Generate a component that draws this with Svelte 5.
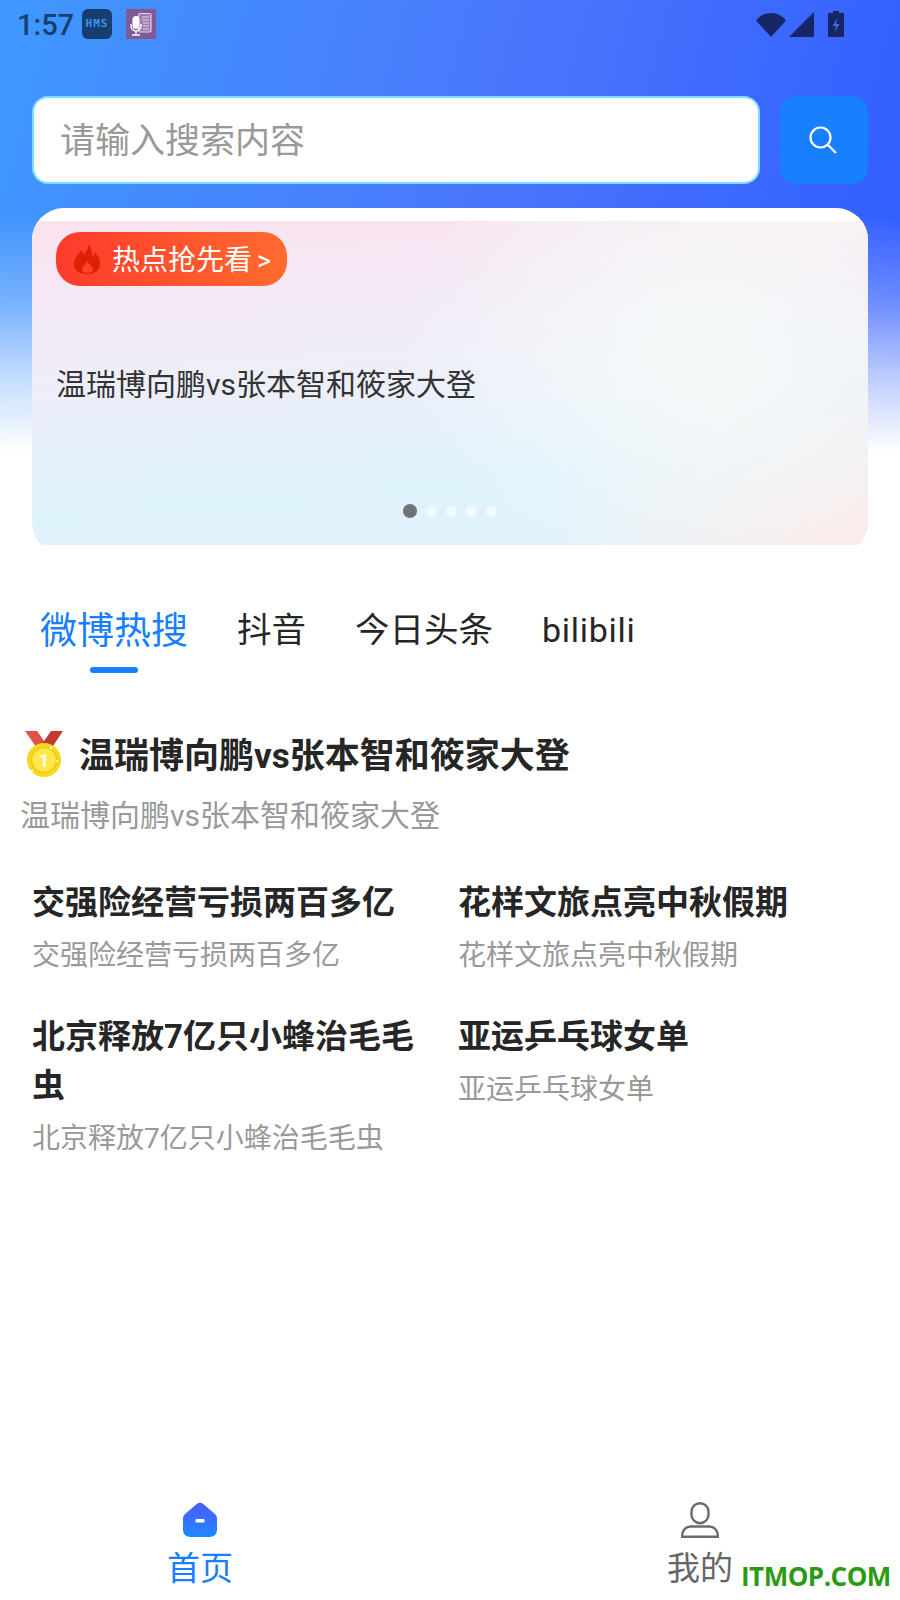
<script>
  const tabs = ['微博热搜', '抖音', '今日头条', 'bilibili'];
  const items = [
    { title: '交强险经营亏损两百多亿', sub: '交强险经营亏损两百多亿' },
    { title: '花样文旅点亮中秋假期', sub: '花样文旅点亮中秋假期' },
    { title: '北京释放7亿只小蜂治毛毛虫', sub: '北京释放7亿只小蜂治毛毛虫' },
    { title: '亚运乒乓球女单', sub: '亚运乒乓球女单' }
  ];
  const headline = '温瑞博向鹏vs张本智和筱家大登';
</script>

<div class="page">
  <div class="status">
    <span class="time">1:57</span>
    <span class="hms">HMS</span>
    <span class="voice">
      <svg viewBox="0 0 30 30" width="30" height="30">
        <rect x="12.500" y="4.500" width="12.500" height="18.500" rx="1.500" fill="#9c7cb0" stroke="#e3d6ea" stroke-width="1.200" />
        <path d="M16 8h7M16 11h7M17 14h6M17 17h6M17 20h6" stroke="#e3d6ea" stroke-width="1.200" />
        <rect x="6.500" y="7" width="7" height="13" rx="3.500" fill="#fff" />
        <path d="M5 15v2a5 5 0 0 0 10 0v-2M10 22v3M6 26h8" fill="none" stroke="#fff" stroke-width="1.400" />
      </svg>
    </span>
    <span class="sys">
      <svg class="wifi" viewBox="0 0 30 25" width="30" height="25"><path d="M0 8.500C4 3.500 9 1 15 1s11 2.500 15 7.500L15 25z" fill="#172766" /></svg>
      <svg class="signal" viewBox="0 0 25 25" width="25" height="25"><path d="M25 0v25H0z" fill="#172766" /></svg>
      <svg class="battery" viewBox="0 0 16 26" width="16" height="26">
        <path d="M5 0h6v2h4a1 1 0 0 1 1 1v22a1 1 0 0 1-1 1H1a1 1 0 0 1-1-1V3a1 1 0 0 1 1-1h4z" fill="#172766" />
        <path d="M9.500 7 4.500 15H8l-1.500 6 5-8H8z" fill="#4267fb" />
      </svg>
    </span>
  </div>

  <div class="search">
    <div class="field">请输入搜索内容</div>
    <div class="btn">
      <svg viewBox="0 0 28 28" width="28" height="28" fill="none" stroke="#fff" stroke-width="2.200">
        <circle cx="11.500" cy="11.500" r="10" />
        <path d="M18.500 18.500 27 27" />
      </svg>
    </div>
  </div>

  <div class="card">
    <div class="banner">
      <div class="badge">
        <svg viewBox="0 0 26 30" width="26" height="30">
          <path d="M14 0c1 5-2 7-4 10C9 8.500 8.500 7.500 8 6 3 11 0 15 0 20c0 6 5 10 12 10h2c7 0 12-4 12-10 0-5-2-8-5-12-.5 2-1 3.500-2.500 4.500C18.500 7.500 17 3 14 0zM13.500 16c0 4 5.500 6 5.500 9.500 0 2-2 3.500-5.500 3.500S8 27.500 8 25c0-3 5-5 5.500-9z" fill="#dd2106" fill-rule="evenodd" />
        </svg>
        <span class="badge-text">热点抢先看</span>
        <span class="chev">&gt;</span>
      </div>
      <div class="banner-title">{headline}</div>
      <div class="dots">
        {#each [0, 1, 2, 3, 4] as d}
          <span class="dot" class:on={d === 0}></span>
        {/each}
      </div>
    </div>
  </div>

  <div class="tabs">
    {#each tabs as t, i}
      <div class="tab" class:active={i === 0}>{t}</div>
    {/each}
  </div>

  <div class="top">
    <div class="top-title">
      <svg class="medal" viewBox="0 0 38 46" width="38" height="46">
        <path d="M0 0h12l10 14-8 6z" fill="#e0514a" />
        <path d="M38 0H26L15 16l9 5z" fill="#c23a2e" />
        <circle cx="19" cy="29" r="17" fill="#f6d81c" />
        <circle cx="19" cy="29" r="12.500" fill="#ffe94a" stroke="#f0c915" stroke-width="1.500" />
        <text x="19" y="35.500" text-anchor="middle" class="medal-n">1</text>
        <circle cx="26" cy="17" r="1.200" fill="#fff" />
        <circle cx="7" cy="40" r="1.200" fill="#fff" />
        <circle cx="32" cy="30" r="1" fill="#fff" />
      </svg>
      <span>{headline}</span>
    </div>
    <div class="top-sub">{headline}</div>
  </div>

  <div class="list">
    {#each items as it}
      <div class="item">
        <div class="it-title">{it.title}</div>
        <div class="it-sub">{it.sub}</div>
      </div>
    {/each}
  </div>

  <div class="nav">
    <div class="nav-item active">
      <svg viewBox="0 0 34 34" width="34" height="34">
        <defs>
          <linearGradient id="homeg" x1="0" y1="0" x2="0" y2="1">
            <stop offset="0" stop-color="#4c5cfb" />
            <stop offset="1" stop-color="#1f88ff" />
          </linearGradient>
        </defs>
        <path d="M13.500 1.300 2 11A6 6 0 0 0 0 15.500V27a7 7 0 0 0 7 7h20a7 7 0 0 0 7-7V15.500A6 6 0 0 0 32 11L20.500 1.300a5.500 5.500 0 0 0-7 0z" fill="url(#homeg)" />
        <rect x="12.500" y="16" width="9" height="3.500" rx="1" fill="#fff" />
      </svg>
      <span>首页</span>
    </div>
    <div class="nav-item">
      <svg viewBox="0 0 38 36" width="38" height="36" fill="none" stroke="#6b6b6b" stroke-width="2.400">
        <rect x="10.500" y="1.200" width="17" height="20" rx="8.500" />
        <path d="M10 24.500h18a8.500 8.500 0 0 1 8.800 8.500v1.800H1.200V33A8.500 8.500 0 0 1 10 24.500z" />
      </svg>
      <span>我的</span>
    </div>
    <div class="mark">ITMOP.COM</div>
  </div>
</div>

<style>
  :global(body) {
    margin: 0;
    background: #fff;
  }
  .page {
    position: relative;
    width: 900px;
    height: 1600px;
    display: flex;
    flex-direction: column;
    overflow: hidden;
    font-family: Roboto, "Noto Sans CJK SC", sans-serif;
    background:
      linear-gradient(to bottom, rgba(255, 255, 255, 0) 0, rgba(255, 255, 255, 0) 215px, rgba(255, 255, 255, 0.28) 300px, rgba(255, 255, 255, 0.72) 385px, #fff 452px) no-repeat,
      linear-gradient(105deg, #3f98ff 0%, #4a78fc 50%, #2f5bff 100%) no-repeat;
    background-size: 100% 452px;
  }

  .status {
    height: 50px;
    display: flex;
    align-items: center;
    padding: 0 56px 0 17px;
    box-sizing: border-box;
    flex: none;
  }
  .time {
    font-size: 29px;
    font-weight: 500;
    line-height: 50px;
    color: #17406f;
    width: 65px;
  }
  .hms {
    width: 30px;
    height: 30px;
    border-radius: 6px;
    background: #173e70;
    color: #3d94ec;
    font: 700 11px/30px "DejaVu Sans Mono", monospace;
    text-align: center;
    letter-spacing: 1px;
    margin-top: -2px;
  }
  .voice {
    width: 30px;
    height: 30px;
    margin: -2px 0 0 14px;
    background: #7f5a94;
    display: block;
  }
  .voice svg,
  .sys svg {
    display: block;
  }
  .sys {
    margin-left: auto;
    display: flex;
    align-items: center;
    margin-top: -2px;
  }
  .signal {
    margin-left: 3px;
  }
  .battery {
    margin-left: 14px;
  }

  .search {
    margin: 46px 32px 0;
    display: flex;
    gap: 20px;
    height: 88px;
    flex: none;
  }
  .field {
    flex: 1;
    background: #fff;
    border: 2px solid #7ddcff;
    border-radius: 16px;
    box-sizing: border-box;
    padding: 2px 0 0 26px;
    font-size: 35px;
    line-height: 84px;
    color: #999;
  }
  .btn {
    width: 88px;
    border-radius: 16px;
    background: #187fff;
    display: flex;
    align-items: center;
    justify-content: center;
  }
  .btn svg {
    transform: translate(-1px, 0);
  }

  .card {
    margin: 24px 32px 0;
    height: 337px;
    flex: none;
    background: #fff;
    padding-top: 13px;
    box-sizing: border-box;
    border-radius: 32px 32px 12px 12px / 32px 32px 26px 26px;
    overflow: hidden;
  }
  .banner {
    height: 324px;
    position: relative;
    padding: 11px 24px 0;
    box-sizing: border-box;
    background:
      radial-gradient(ellipse 300px 230px at 80% 40%, #f5faf9 0%, rgba(245, 250, 249, 0) 100%),
      radial-gradient(ellipse 320px 220px at 100% 100%, #feebe9 0%, rgba(254, 235, 233, 0) 100%),
      radial-gradient(ellipse 420px 120px at 100% 0%, #f9eef4 0%, rgba(249, 238, 244, 0) 100%),
      linear-gradient(176deg, #fbe2f0 0%, #efeef9 42%, #dff3fd 76%, #e2f3fb 100%);
  }
  .badge {
    width: 231px;
    height: 54px;
    border-radius: 24px;
    background: linear-gradient(90deg, #ff3b2c 0%, #ff6b2f 100%);
    display: flex;
    align-items: center;
    padding: 0 0 0 18px;
    box-sizing: border-box;
    color: #fff;
  }
  .badge-text {
    font-size: 28px;
    margin: 4px 0 0 12px;
    line-height: 50px;
    white-space: nowrap;
  }
  .chev {
    font-size: 27px;
    margin: 4px 0 0 5px;
    line-height: 50px;
  }
  .banner-title {
    margin: 77px 0 0 0;
    font-size: 30px;
    line-height: 44px;
    color: #333;
    white-space: nowrap;
  }
  .dots {
    position: absolute;
    left: 371px;
    top: 283px;
    display: flex;
    align-items: center;
    gap: 9px;
  }
  .dot {
    width: 11px;
    height: 11px;
    border-radius: 50%;
    background: rgba(255, 255, 255, 0.6);
  }
  .dot.on {
    width: 14px;
    height: 14px;
    background: #6f7377;
  }

  .tabs {
    display: flex;
    align-items: flex-start;
    margin-top: 59px;
    padding-left: 40px;
    height: 52px;
    flex: none;
    color: #262626;
    font-size: 34.500px;
  }
  .tab {
    position: relative;
    margin-right: 49px;
    line-height: 52px;
    white-space: nowrap;
  }
  .tab:nth-child(4) {
    font-size: 34px;
    letter-spacing: 0.7px;
  }
  .tab.active {
    font-size: 37px;
    line-height: 56px;
    color: #187fff;
  }
  .tab.active::after {
    content: "";
    position: absolute;
    left: 50px;
    top: 63px;
    width: 48px;
    height: 6px;
    border-radius: 3px;
    background: #187fff;
  }

  .top {
    margin-top: 71px;
    padding-left: 20px;
    flex: none;
  }
  .top-title {
    display: flex;
    align-items: center;
    height: 50px;
    font-size: 35px;
    font-weight: 700;
    color: #262626;
    white-space: nowrap;
  }
  .medal {
    margin: 3px 16px 0 5px;
  }
  .medal-n {
    font: 700 18px Roboto, sans-serif;
    fill: #fff;
  }
  .top-sub {
    margin-top: 17px;
    font-size: 30px;
    line-height: 44px;
    color: #999;
    white-space: nowrap;
  }

  .list {
    margin-top: 40px;
    padding-left: 32px;
    display: grid;
    grid-template-columns: 426px 425px;
    row-gap: 34px;
    align-content: start;
    flex: none;
  }
  .it-title {
    width: 400px;
    font-size: 33px;
    font-weight: 700;
    line-height: 49px;
    color: #262626;
  }
  .it-sub {
    margin-top: 7px;
    font-size: 28px;
    line-height: 44px;
    color: #999;
  }

  .nav {
    position: relative;
    margin-top: auto;
    height: 100px;
    padding-top: 2px;
    box-sizing: border-box;
    display: flex;
    justify-content: space-between;
    flex: none;
  }
  .nav-item {
    width: 400px;
    display: flex;
    flex-direction: column;
    align-items: center;
    color: #666;
    font-size: 33px;
    line-height: 44px;
  }
  .nav-item svg {
    display: block;
    height: 36px;
    flex: none;
  }
  .nav-item.active {
    color: #187fff;
  }
  .nav-item span {
    margin-top: 9px;
  }
  .mark {
    position: absolute;
    left: 741px;
    top: 59px;
    color: #2c9a14;
    font: 700 26px/34px "Open Sans", sans-serif;
    letter-spacing: -0.5px;
    white-space: nowrap;
  }
</style>
